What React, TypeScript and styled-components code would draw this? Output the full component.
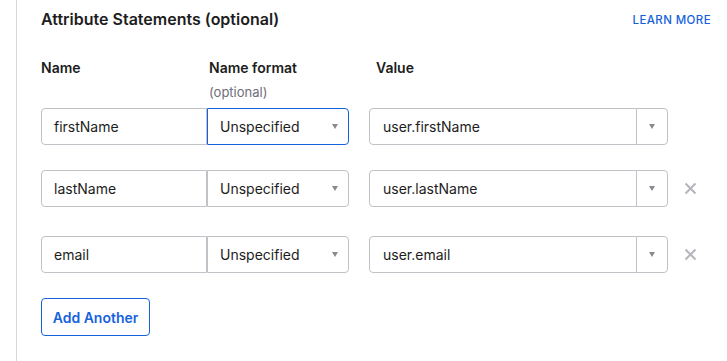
import React from "react"
import styled, { createGlobalStyle } from "styled-components"

const GlobalStyle = createGlobalStyle`
  html, body {
    margin: 0;
    padding: 0;
    background: #fff;
  }
  body {
    font-family: Inter, "Noto Sans", sans-serif;
    color: #1d1d21;
    -webkit-font-smoothing: antialiased;
  }
`

const Page = styled.div`
  width: 727px;
  height: 361px;
  overflow: hidden;
  display: flex;
`

const Section = styled.section`
  margin-left: 16px;
  border-left: 1px solid #d7d7dc;
  flex: 1;
  padding: 9px 16px 0 24px;
`

const HeaderRow = styled.div`
  display: flex;
  justify-content: space-between;
  align-items: flex-start;
`

const Title = styled.h2`
  margin: 0;
  font-size: 16px;
  line-height: 20px;
  font-weight: 600;
  color: #1d1d21;
`

const LearnMore = styled.a`
  margin-top: 3px;
  font-size: 11.5px;
  line-height: 16px;
  font-weight: 500;
  letter-spacing: 0.4px;
  color: #1662dd;
  text-decoration: none;
  text-transform: uppercase;
`

const ColumnHeads = styled.div`
  display: flex;
  margin-top: 29px;
  height: 50px;
`

const ColumnHead = styled.div<{ $width: number; $gapAfter?: number; $inset?: number }>`
  box-sizing: border-box;
  width: ${({ $width }) => $width}px;
  margin-right: ${({ $gapAfter }) => $gapAfter ?? 0}px;
  padding-left: ${({ $inset }) => $inset ?? 0}px;
  flex-shrink: 0;
`

const HeadLabel = styled.div`
  font-size: 14px;
  line-height: 20px;
  font-weight: 600;
  color: #1d1d21;
`

const HeadHint = styled.div`
  margin-top: 5px;
  font-size: 13px;
  line-height: 18px;
  color: #6e6e78;
`

const Row = styled.div<{ $gapAfter: number }>`
  display: flex;
  align-items: center;
  height: 37px;
  margin-bottom: ${({ $gapAfter }) => $gapAfter}px;
`

const fieldBase = `
  box-sizing: border-box;
  height: 37px;
  border: 1px solid #c1c1c8;
  background: #fff;
  font-family: Inter, "Noto Sans", sans-serif;
  font-size: 14px;
  color: #1d1d21;
  display: flex;
  align-items: center;
`

const NameInput = styled.div`
  ${fieldBase}
  width: 166px;
  padding-left: 12px;
  border-radius: 4px 0 0 4px;
`

const FormatSelect = styled.div<{ $focused?: boolean }>`
  ${fieldBase}
  width: 142px;
  margin-right: 20px;
  padding: 0 10px 0 12px;
  justify-content: space-between;
  border-radius: 0 4px 4px 0;
  border-color: ${({ $focused }) => ($focused ? "#1662dd" : "#c1c1c8")};
`

const ValueCombo = styled.div`
  ${fieldBase}
  width: 299px;
  border-radius: 4px;
`

const ValueText = styled.div`
  flex: 1;
  padding-left: 13px;
`

const ComboToggle = styled.div`
  width: 30px;
  height: 100%;
  border-left: 1px solid #c1c1c8;
  display: flex;
  align-items: center;
  justify-content: center;
`

const Caret = styled.span`
  width: 0;
  height: 0;
  border-left: 3.5px solid transparent;
  border-right: 3.5px solid transparent;
  border-top: 5px solid #8a8a92;
`

const RemoveButton = styled.button`
  margin-left: 16px;
  padding: 0;
  width: 13px;
  height: 13px;
  border: none;
  background: none;
  display: flex;
  cursor: pointer;
`

const AddButton = styled.button`
  box-sizing: border-box;
  height: 38px;
  width: 109px;
  border: 1px solid #1662dd;
  border-radius: 4px;
  background: #fff;
  color: #1662dd;
  font-family: Inter, "Noto Sans", sans-serif;
  font-size: 14px;
  font-weight: 600;
  padding: 0;
  cursor: pointer;
`

const rows = [
  { name: "firstName", value: "user.firstName", focused: true, removable: false, gap: 25 },
  { name: "lastName", value: "user.lastName", focused: false, removable: true, gap: 29 },
  { name: "email", value: "user.email", focused: false, removable: true, gap: 25 },
]

const CloseIcon = () => (
  <svg width="13" height="13" viewBox="0 0 13 13">
    <path d="M1.5 1.5 L11.5 11.5 M11.5 1.5 L1.5 11.5" stroke="#b5b5bc" strokeWidth="2" />
  </svg>
)

export default function App() {
  return (
    <Page>
      <GlobalStyle />
      <Section>
        <HeaderRow>
          <Title>Attribute Statements (optional)</Title>
          <LearnMore href="#">Learn more</LearnMore>
        </HeaderRow>

        <ColumnHeads>
          <ColumnHead $width={166}>
            <HeadLabel>Name</HeadLabel>
          </ColumnHead>
          <ColumnHead $width={142} $gapAfter={20} $inset={2}>
            <HeadLabel>Name format</HeadLabel>
            <HeadHint>(optional)</HeadHint>
          </ColumnHead>
          <ColumnHead $width={299} $inset={7}>
            <HeadLabel>Value</HeadLabel>
          </ColumnHead>
        </ColumnHeads>

        {rows.map((row) => (
          <Row key={row.name} $gapAfter={row.gap}>
            <NameInput>{row.name}</NameInput>
            <FormatSelect $focused={row.focused}>
              Unspecified
              <Caret />
            </FormatSelect>
            <ValueCombo>
              <ValueText>{row.value}</ValueText>
              <ComboToggle>
                <Caret />
              </ComboToggle>
            </ValueCombo>
            {row.removable && (
              <RemoveButton aria-label="Remove">
                <CloseIcon />
              </RemoveButton>
            )}
          </Row>
        ))}

        <AddButton>Add Another</AddButton>
      </Section>
    </Page>
  )
}
